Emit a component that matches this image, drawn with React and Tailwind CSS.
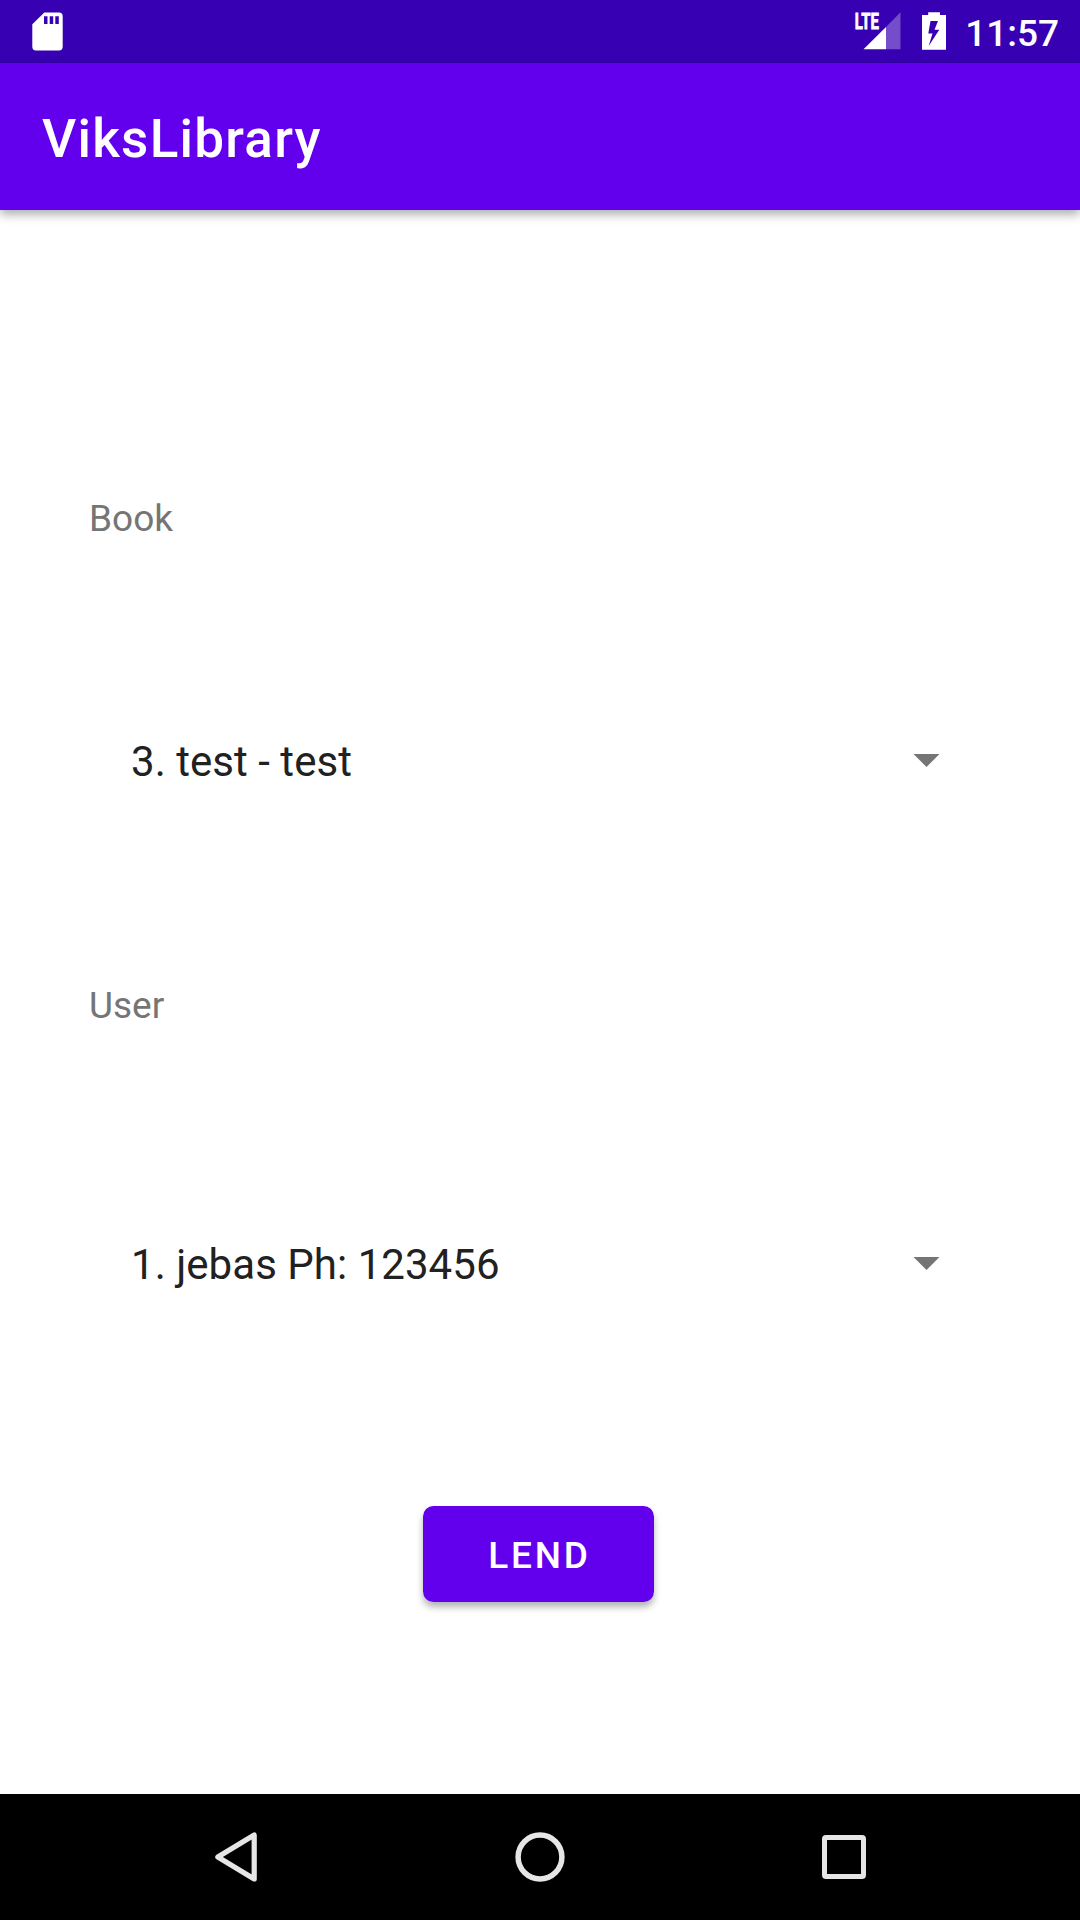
function SdCardIcon() {
  return (
    <svg className="block h-[63px] w-[66px]" viewBox="0 0 66 63">
      <path
        fill="#fff"
        fillRule="evenodd"
        d="M44.300 12.500H59a3.700 3.700 0 0 1 3.700 3.700v30.600a3.700 3.700 0 0 1-3.700 3.700H36a3.700 3.700 0 0 1-3.700-3.700V24.200ZM44 16.300v7.700h3.500v-7.700ZM49.700 16.300v7.700h3.500v-7.700ZM55.300 16.300v7.700h3.500v-7.700Z"
      />
    </svg>
  );
}

function SignalIcon() {
  return (
    <svg className="block h-[63px] w-[48px]" viewBox="0 0 48 63">
      <path fill="#fff" fillOpacity="0.3" d="M47.500 12.300V49.300H33V27Z" />
      <path fill="#fff" d="M33 27V49.300H10.500Z" />
      <text
        x="1.800"
        y="29"
        fill="#fff"
        stroke="#fff"
        strokeWidth="0.800"
        fontSize="21.500"
        fontWeight="700"
        textLength="24"
        lengthAdjust="spacingAndGlyphs"
        className="font-['Roboto',sans-serif]"
      >
        LTE
      </text>
    </svg>
  );
}

function BatteryIcon() {
  return (
    <svg className="block h-[63px] w-[24px]" viewBox="0 0 24 63">
      <path
        fill="#fff"
        fillRule="evenodd"
        d="M6.200 12.300H18V15H24V49.700H0V15H6.200ZM8.500 21L6.300 33.500H10.500L6.700 46L17.300 29.700H12.500L16 21Z"
      />
    </svg>
  );
}

function Spinner({ text }) {
  return (
    <div className="ml-[89px] mr-[110px] flex h-[63px] items-center justify-between pl-[42px] pr-[30px] text-[42px] tracking-[0.04px] text-[#212121]">
      <span className="whitespace-nowrap pt-[2px] leading-[49px]">{text}</span>
      <svg className="block h-[13px] w-[27px]" viewBox="0 0 27 13">
        <path fill="#757575" d="M0.500 0H26.500L13.500 13Z" />
      </svg>
    </div>
  );
}

function Label({ children }) {
  return (
    <div className="pl-[89px] text-[37px] leading-[49px] text-[#757575]">
      {children}
    </div>
  );
}

export default function App() {
  return (
    <div className="flex h-[1920px] w-[1080px] flex-col overflow-hidden bg-white font-['Roboto',sans-serif]">
      <div className="flex h-[63px] shrink-0 items-center justify-between bg-[#3700b3] pr-[21px]">
        <SdCardIcon />
        <div className="flex items-center">
          <SignalIcon />
          <div className="ml-[21px]">
            <BatteryIcon />
          </div>
          <span className="ml-[19px] pt-[4px] text-[37px] font-medium leading-[59px] text-white">11:57</span>
        </div>
      </div>

      <header className="flex h-[147px] shrink-0 items-center bg-[#6200ee] pl-[42px] shadow-[0_4px_10px_rgba(0,0,0,0.35)]">
        <h1 className="pt-[5px] text-[53px] font-medium leading-[62px] tracking-[1.250px] text-white">ViksLibrary</h1>
      </header>

      <main className="flex flex-1 flex-col pt-[284px]">
        <Label>Book</Label>
        <div className="mt-[186px]">
          <Spinner text="3. test - test" />
        </div>
        <div className="mt-[189px]">
          <Label>User</Label>
        </div>
        <div className="mt-[202px]">
          <Spinner text="1. jebas Ph: 123456" />
        </div>
        <button className="ml-[423px] mt-[211px] h-[96px] w-[231px] rounded-[10.500px] bg-[#6200ee] pl-[2px] pt-[2px] text-[37px] font-medium leading-[49px] tracking-[2.800px] text-white shadow-[0_5px_7px_rgba(0,0,0,0.3)]">
          LEND
        </button>
      </main>

      <nav className="flex h-[126px] shrink-0 items-center justify-between bg-black pl-[215px] pr-[214px]">
        <svg className="block h-[50px] w-[42px]" viewBox="0 0 42 50">
          <path
            fill="none"
            stroke="#e6e6e6"
            strokeWidth="5.200"
            strokeLinejoin="round"
            d="M39.200 3V47L2.800 25Z"
          />
        </svg>
        <svg className="block h-[50px] w-[50px]" viewBox="0 0 50 50">
          <circle cx="25" cy="25" r="21.900" fill="none" stroke="#e6e6e6" strokeWidth="5.500" />
        </svg>
        <svg className="block h-[44px] w-[44px]" viewBox="0 0 44 44">
          <rect x="2.500" y="2.500" width="39" height="39" rx="1.500" fill="none" stroke="#e6e6e6" strokeWidth="5" />
        </svg>
      </nav>
    </div>
  );
}
